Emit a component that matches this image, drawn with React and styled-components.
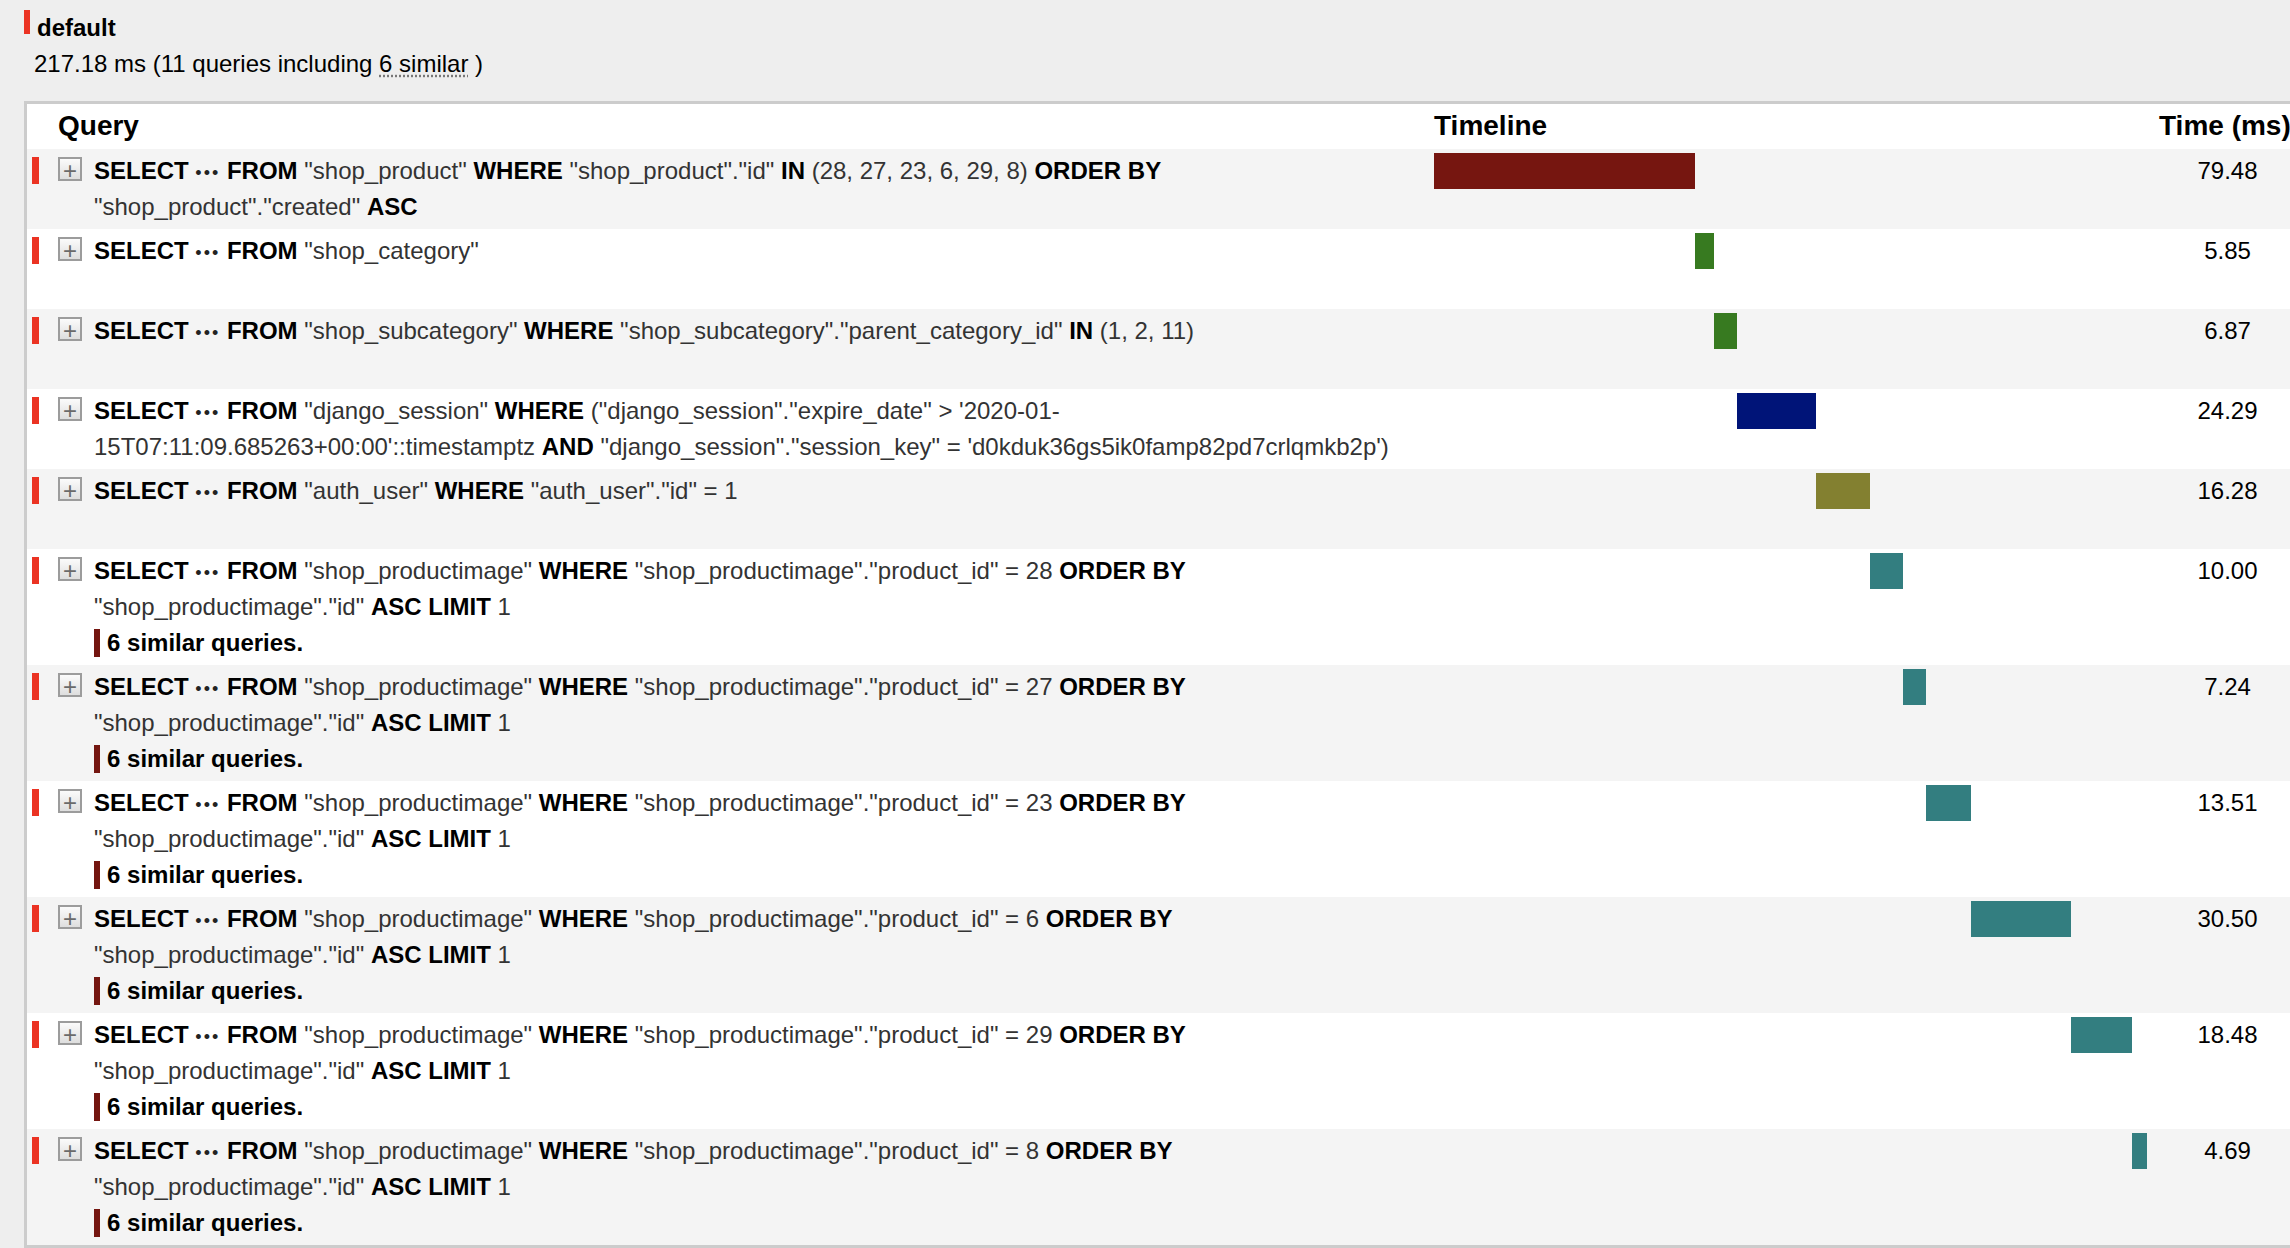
import React from "react";
import styled, { createGlobalStyle } from "styled-components";

const GlobalStyle = createGlobalStyle`
  html, body {
    margin: 0;
    padding: 0;
    overflow: hidden;
    background: #eeeeee;
  }
  body {
    font-family: "Liberation Sans", Arial, Helvetica, sans-serif;
    color: #000;
  }
`;

const TOTAL = 217.18;
const similarIds = [28, 27, 23, 6, 29, 8];
const similarTimes = [10.0, 7.24, 13.51, 30.5, 18.48, 4.69];

// keywords are wrapped in ** **, ~ is the collapsed column list,
// a | marks a spot where the line may break
const queries = [
  {
    sql: '**SELECT** ~ **FROM** "shop_product" **WHERE** "shop_product"."id" **IN** (28, 27, 23, 6, 29, 8) **ORDER BY** "shop_product"."created" **ASC**',
    time: 79.48,
    color: "#761610",
  },
  {
    sql: '**SELECT** ~ **FROM** "shop_category"',
    time: 5.85,
    color: "#377a20",
  },
  {
    sql: '**SELECT** ~ **FROM** "shop_subcategory" **WHERE** "shop_subcategory"."parent_category_id" **IN** (1, 2, 11)',
    time: 6.87,
    color: "#377a20",
  },
  {
    sql: `**SELECT** ~ **FROM** "django_session" **WHERE** ("django_session"."expire_date" > '2020-01-|15T07:11:09.685263+00:00'::timestamptz **AND** "django_session"."session_key" = 'd0kduk36gs5ik0famp82pd7crlqmkb2p')`,
    time: 24.29,
    color: "#001478",
  },
  {
    sql: '**SELECT** ~ **FROM** "auth_user" **WHERE** "auth_user"."id" = 1',
    time: 16.28,
    color: "#838030",
  },
  ...similarIds.map((id, i) => ({
    sql: `**SELECT** ~ **FROM** "shop_productimage" **WHERE** "shop_productimage"."product_id" = ${id} **ORDER BY** "shop_productimage"."id" **ASC LIMIT** 1`,
    time: similarTimes[i],
    color: "#337e80",
    similar: 6,
  })),
];

function renderPlain(text, key) {
  return text.split("~").map((chunk, k) => (
    <React.Fragment key={`${key}-${k}`}>
      {k > 0 && <Dots>•••</Dots>}
      {chunk.split("|").map((p, j) => (
        <React.Fragment key={j}>
          {j > 0 && <wbr />}
          {p}
        </React.Fragment>
      ))}
    </React.Fragment>
  ));
}

function renderSql(sql) {
  return sql
    .split("**")
    .map((part, i) =>
      i % 2 === 1 ? <Kw key={i}>{part}</Kw> : renderPlain(part, i)
    );
}

function App() {
  let offset = 0;
  return (
    <Page>
      <GlobalStyle />
      <Heading>
        <AliasMark />
        default
      </Heading>
      <Summary>
        217.18 ms (11 queries including <Dotted>6 similar</Dotted> )
      </Summary>
      <Table>
        <HeadRow>
          <Th />
          <Th $span={2}>Query</Th>
          <Th>Timeline</Th>
          <Th>Time (ms)</Th>
          <Th>Action</Th>
        </HeadRow>
        {queries.map((q, i) => {
          const left = (offset / TOTAL) * 100;
          const width = (q.time / TOTAL) * 100;
          offset += q.time;
          return (
            <Row key={i} $odd={i % 2 === 0}>
              <ColorCell>
                <RowMark />
              </ColorCell>
              <ToggleCell>
                <Toggle>+</Toggle>
              </ToggleCell>
              <QueryCell>
                <Sql>{renderSql(q.sql)}</Sql>
                {q.similar && (
                  <Similar>
                    <SimilarMark />
                    {q.similar} similar queries.
                  </Similar>
                )}
              </QueryCell>
              <TimelineCell>
                <Bar
                  style={{
                    marginLeft: `${left}%`,
                    width: `${width}%`,
                    background: q.color,
                  }}
                />
              </TimelineCell>
              <TimeCell>{q.time.toFixed(2)}</TimeCell>
              <Cell />
            </Row>
          );
        })}
      </Table>
    </Page>
  );
}

export default App;

const Page = styled.div`
  width: 100vw;
  height: 100vh;
  overflow: hidden;
  padding-left: 24px;
  box-sizing: border-box;
`;

const Heading = styled.h4`
  display: flex;
  align-items: flex-start;
  margin: 10px 0 0;
  font-size: 24px;
  line-height: 36px;
  font-weight: 700;
`;

const AliasMark = styled.span`
  display: block;
  width: 6px;
  height: 24px;
  margin-right: 7px;
  background: #eb3323;
`;

const Summary = styled.p`
  margin: 0;
  padding-left: 10px;
  font-size: 24px;
  line-height: 36px;
`;

const Dotted = styled.span`
  text-decoration: underline dotted #777;
  text-underline-offset: 3px;
`;

const Table = styled.div`
  margin-top: 19px;
  width: 2420px;
  border: 3px solid #cccccc;
  border-right: none;
  background: #fff;
`;

const columns = "25px 36px 1340px 725px 149px 118px";

const HeadRow = styled.div`
  display: grid;
  grid-template-columns: ${columns};
  background: #fff;
`;

const Th = styled.div`
  grid-column: span ${(p) => p.$span || 1};
  padding: 4px 6px 5px;
  font-size: 28px;
  line-height: 36px;
  font-weight: 700;
  white-space: nowrap;
`;

const Row = styled.div`
  display: grid;
  grid-template-columns: ${columns};
  background: ${(p) => (p.$odd ? "#f4f4f4" : "#ffffff")};
`;

const Cell = styled.div`
  padding: 4px 6px;
  font-size: 24px;
  line-height: 36px;
`;

const ColorCell = styled(Cell)`
  padding: 8px 0 4px 5px;
`;

const RowMark = styled.span`
  display: block;
  width: 7px;
  height: 27px;
  background: #eb3323;
`;

const ToggleCell = styled(Cell)`
  padding-top: 8px;
`;

const Toggle = styled.span`
  display: flex;
  align-items: center;
  justify-content: center;
  box-sizing: border-box;
  width: 24px;
  height: 24px;
  padding-top: 3px;
  border: 2px solid #9c9c9c;
  background: linear-gradient(#fbfbfb, #dedede);
  color: #6a6a6a;
  font-size: 24px;
  line-height: 20px;
`;

const QueryCell = styled(Cell)`
  min-height: 72px;
`;

const Sql = styled.div`
  color: #333;
`;

const Kw = styled.strong`
  color: #000;
  font-weight: 700;
`;

const Dots = styled.span`
  font-size: 18px;
  line-height: 1;
  letter-spacing: 2px;
  color: #222;
`;

const Similar = styled.div`
  display: flex;
  align-items: flex-start;
  font-weight: 700;
  color: #000;
`;

const SimilarMark = styled.span`
  display: block;
  width: 6px;
  height: 28px;
  margin: 4px 7px 0 0;
  background: #741610;
`;

const TimelineCell = styled(Cell)``;

const Bar = styled.div`
  height: 36px;
`;

const TimeCell = styled(Cell)`
  text-align: center;
`;
